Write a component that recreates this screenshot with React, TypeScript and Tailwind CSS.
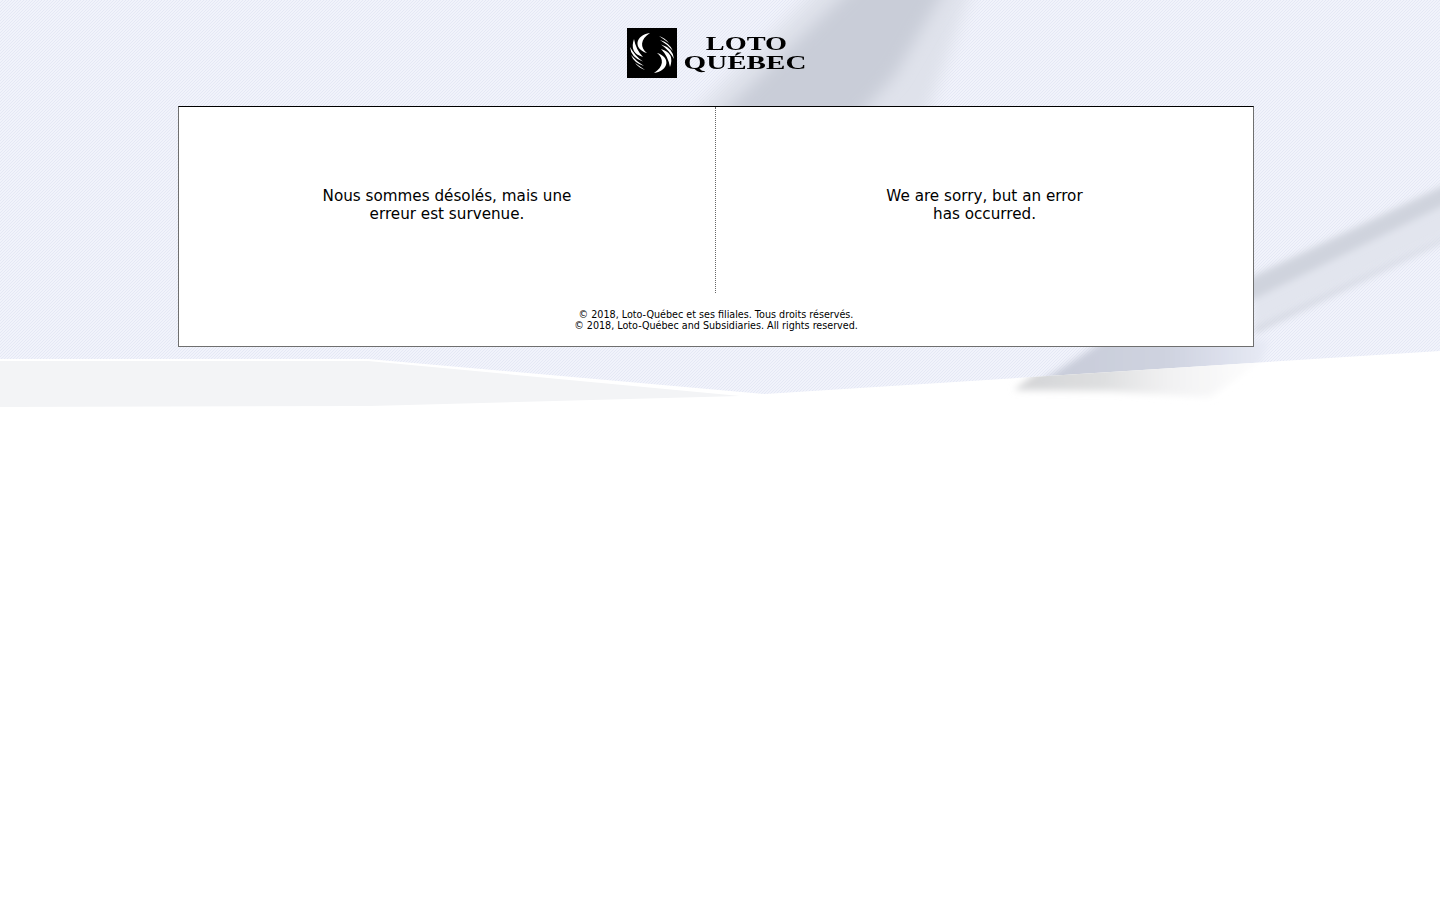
import React from 'react';

// page backdrop: hatched blue with soft grey streaks and the white swoosh
function Backdrop() {
  return (
    <svg className="absolute left-0 top-0" width="1440" height="420" viewBox="0 0 1440 420">
      <defs>
        <pattern id="hatch" width="3" height="3" patternUnits="userSpaceOnUse">
          <rect width="3" height="3" fill="#f1f3fb" />
          <path d="M0 3L3 0M-1 1L1 -1M2 4L4 2" stroke="#e5e8f5" strokeWidth="1" />
        </pattern>
        <filter id="soft" x="-30%" y="-30%" width="160%" height="160%">
          <feGaussianBlur stdDeviation="8" />
        </filter>
        <filter id="softer" x="-30%" y="-30%" width="160%" height="160%">
          <feGaussianBlur stdDeviation="3.5" />
        </filter>
        <linearGradient id="shade" x1="0" y1="0" x2="1" y2="0">
          <stop offset="0" stopColor="#d3d4d6" />
          <stop offset="0.35" stopColor="#dedfe0" />
          <stop offset="0.6" stopColor="#f1f1f2" />
          <stop offset="1" stopColor="#ffffff" />
        </linearGradient>
        <linearGradient id="fade" x1="0" y1="0" x2="1" y2="0">
          <stop offset="0" stopColor="#c6cad7" />
          <stop offset="0.6" stopColor="#cfd3e0" />
          <stop offset="1" stopColor="#e8ebf6" />
        </linearGradient>
        <clipPath id="swoosh">
          <path d="M0 359L368 359L765 394L1440 351L1440 420L0 420Z" />
        </clipPath>
      </defs>
      <rect width="1440" height="420" fill="url(#hatch)" />
      <path d="M825 -20L975 -20L925 120L685 120Z" fill="#dfe2eb" filter="url(#soft)" />
      <path d="M860 -20L950 -20L895 75L855 120L715 120Z" fill="#c9cdd8" filter="url(#soft)" />
      <path d="M1254 275L1450 182L1450 232L1254 328Z" fill="#e2e5ee" filter="url(#softer)" />
      <path d="M1244 282L1450 184L1450 202L1244 304Z" fill="#cfd3dd" filter="url(#softer)" />
      <path d="M1254 328L1450 234L1450 238L1254 334Z" fill="#cfd3dd" filter="url(#softer)" />
      <path d="M1105 340L1270 340L1250 390L1020 395Z" fill="url(#fade)" filter="url(#softer)" />
      <path d="M0 359L368 359L765 394L1440 351L1440 420L0 420Z" fill="#ffffff" />
      <path d="M0 361L368 361L740 396L370 406L0 407Z" fill="#f3f4f6" />
      <g clipPath="url(#swoosh)">
        <path d="M1014 390L1040 370L1270 355L1210 397L1108 391Z" fill="url(#shade)" filter="url(#softer)" />
      </g>
    </svg>
  );
}

const ribs = [
  'M7 11Q2 25 16 29Q9 22 7 11Z',
  'M3 19Q4 30 16 33.5Q8 28 3 19Z',
  'M4 27Q7 35 17 38Q10 34 4 27Z',
  'M8 35Q12 40 18 42Q13 38.5 8 35Z',
];

// swirl mark: white crescents on the black square, second half is the first turned around
function LogoMark() {
  const half = (
    <>
      <path d="M23 5C8 7 6 21 20 25C13 20 13 11 23 5Z" fill="#fff" />
      {ribs.map((d) => (
        <path key={d} d={d} fill="#fff" />
      ))}
    </>
  );
  return (
    <svg width="50" height="50" viewBox="0 0 50 50" className="shrink-0">
      <rect width="50" height="50" fill="#000" />
      {half}
      <g transform="rotate(180 25 25)">{half}</g>
    </svg>
  );
}

function Logo() {
  return (
    <div className="flex h-[50px] w-[179px]">
      <LogoMark />
      <div className="flex-1 pt-[6px] text-center font-['Liberation_Serif',serif] text-[19px] font-bold leading-[19px] text-black">
        <div className="ml-[10px] scale-x-[1.49]">LOTO</div>
        <div className="ml-[7px] scale-x-[1.53]">QUÉBEC</div>
      </div>
    </div>
  );
}

export default function App() {
  return (
    <div className="relative min-h-[900px] bg-white font-['DejaVu_Sans',sans-serif] text-black">
      <Backdrop />
      <div className="relative flex flex-col items-center pr-2 pt-7">
        <Logo />
        <div className="mt-7 h-[241px] w-[1076px] border border-[#6f6f6f] border-t-black bg-white">
          <div className="flex h-[186px]">
            <div className="flex w-[537px] items-center justify-center border-r border-dotted border-[#666] pt-[9px] text-center text-[15.2px] leading-[18px]">
              <p>
                Nous sommes désolés, mais une
                <br />
                erreur est survenue.
              </p>
            </div>
            <div className="flex flex-1 items-center justify-center pt-[9px] text-center text-[15.2px] leading-[18px]">
              <p>
                We are sorry, but an error
                <br />
                has occurred.
              </p>
            </div>
          </div>
          <p className="mt-4 text-center text-[9.6px] leading-[11px]">
            © 2018, Loto-Québec et ses filiales. Tous droits réservés.
            <br />© 2018, Loto-Québec and Subsidiaries. All rights reserved.
          </p>
        </div>
      </div>
    </div>
  );
}
